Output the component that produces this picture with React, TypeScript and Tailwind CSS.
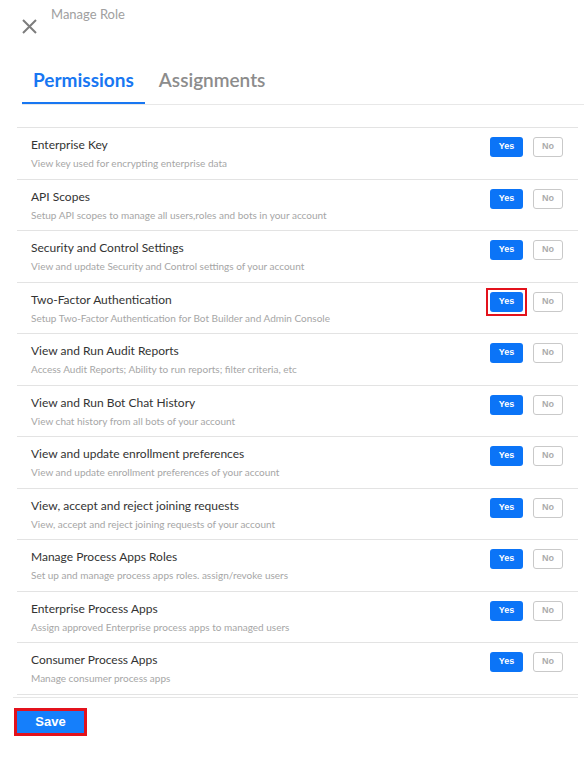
import React from "react";

const rows = [
  ["Enterprise Key", "View key used for encrypting enterprise data"],
  ["API Scopes", "Setup API scopes to manage all users,roles and bots in your account"],
  ["Security and Control Settings", "View and update Security and Control settings of your account"],
  ["Two-Factor Authentication", "Setup Two-Factor Authentication for Bot Builder and Admin Console"],
  ["View and Run Audit Reports", "Access Audit Reports; Ability to run reports; filter criteria, etc"],
  ["View and Run Bot Chat History", "View chat history from all bots of your account"],
  ["View and update enrollment preferences", "View and update enrollment preferences of your account"],
  ["View, accept and reject joining requests", "View, accept and reject joining requests of your account"],
  ["Manage Process Apps Roles", "Set up and manage process apps roles. assign/revoke users"],
  ["Enterprise Process Apps", "Assign approved Enterprise process apps to managed users"],
  ["Consumer Process Apps", "Manage consumer process apps"],
];

function YesBtn() {
  return (
    <button className="w-[33px] h-[20px] rounded-[3px] bg-[#0b74f7] text-white text-[9px] font-bold font-['Liberation_Sans',Arial,sans-serif] flex items-center justify-center">
      Yes
    </button>
  );
}

export default function App() {
  return (
    <div className="w-[584px] h-[759px] bg-white overflow-hidden font-['Lato','Noto_Sans',sans-serif]">
      <div className="flex pl-[22px] pt-[6px]">
        <svg className="mt-[13px] w-[15px] h-[15px]" viewBox="0 0 15 15" fill="none" stroke="#7d7d7d" strokeWidth="2">
          <path d="M1 1 L14 14 M14 1 L1 14" />
        </svg>
        <span className="ml-[14px] text-[13px] leading-[16px] text-[#a0a0a0]">Manage Role</span>
      </div>

      <div className="ml-[22px] mt-[34px] flex border-b border-[#e8e8e8]">
        <div className="px-[11px] pb-[10px] border-b-2 border-[#1877f2] text-[19px] leading-[24px] font-bold text-[#1877f2]">
          Permissions
        </div>
        <div className="pl-[14px] pb-[12px] text-[19px] leading-[24px] font-semibold text-[#8c8c8c]">
          Assignments
        </div>
      </div>

      <div className="mt-[22px] ml-[17px] w-[561px] border-t border-[#e3e3e3]">
        {rows.map(([t, d], i) => (
          <div
            key={t}
            className="flex items-start justify-between h-[51.5px] border-b border-[#e3e3e3] pl-[14px] pr-[15px]"
          >
            <div className="pt-[9px]">
              <div className="text-[12px] leading-[16px] text-[#333333]">{t}</div>
              <div className="mt-[3px] text-[10px] leading-[14px] text-[#a6a6a6]">{d}</div>
            </div>
            <div className="flex items-center gap-[10px] pt-[9px]">
              {i === 3 ? (
                <span className="-m-[4px] p-[2px] border-2 border-[#e3121c] flex">
                  <YesBtn />
                </span>
              ) : (
                <YesBtn />
              )}
              <button className="w-[30px] h-[20px] rounded-[3px] border border-[#c9c9c9] bg-white text-[#ababab] text-[9px] font-bold font-['Liberation_Sans',Arial,sans-serif] flex items-center justify-center">
                No
              </button>
            </div>
          </div>
        ))}
      </div>
      <div className="mt-[2px] ml-[13px] w-[565px] border-t border-[#e6e6e6]" />

      <button className="ml-[14px] mt-[10px] w-[73px] h-[28px] border-[3px] border-[#e3121c] bg-[#157ffb] text-white text-[13px] font-bold font-['Liberation_Sans',Arial,sans-serif] flex items-center justify-center">
        Save
      </button>
    </div>
  );
}
